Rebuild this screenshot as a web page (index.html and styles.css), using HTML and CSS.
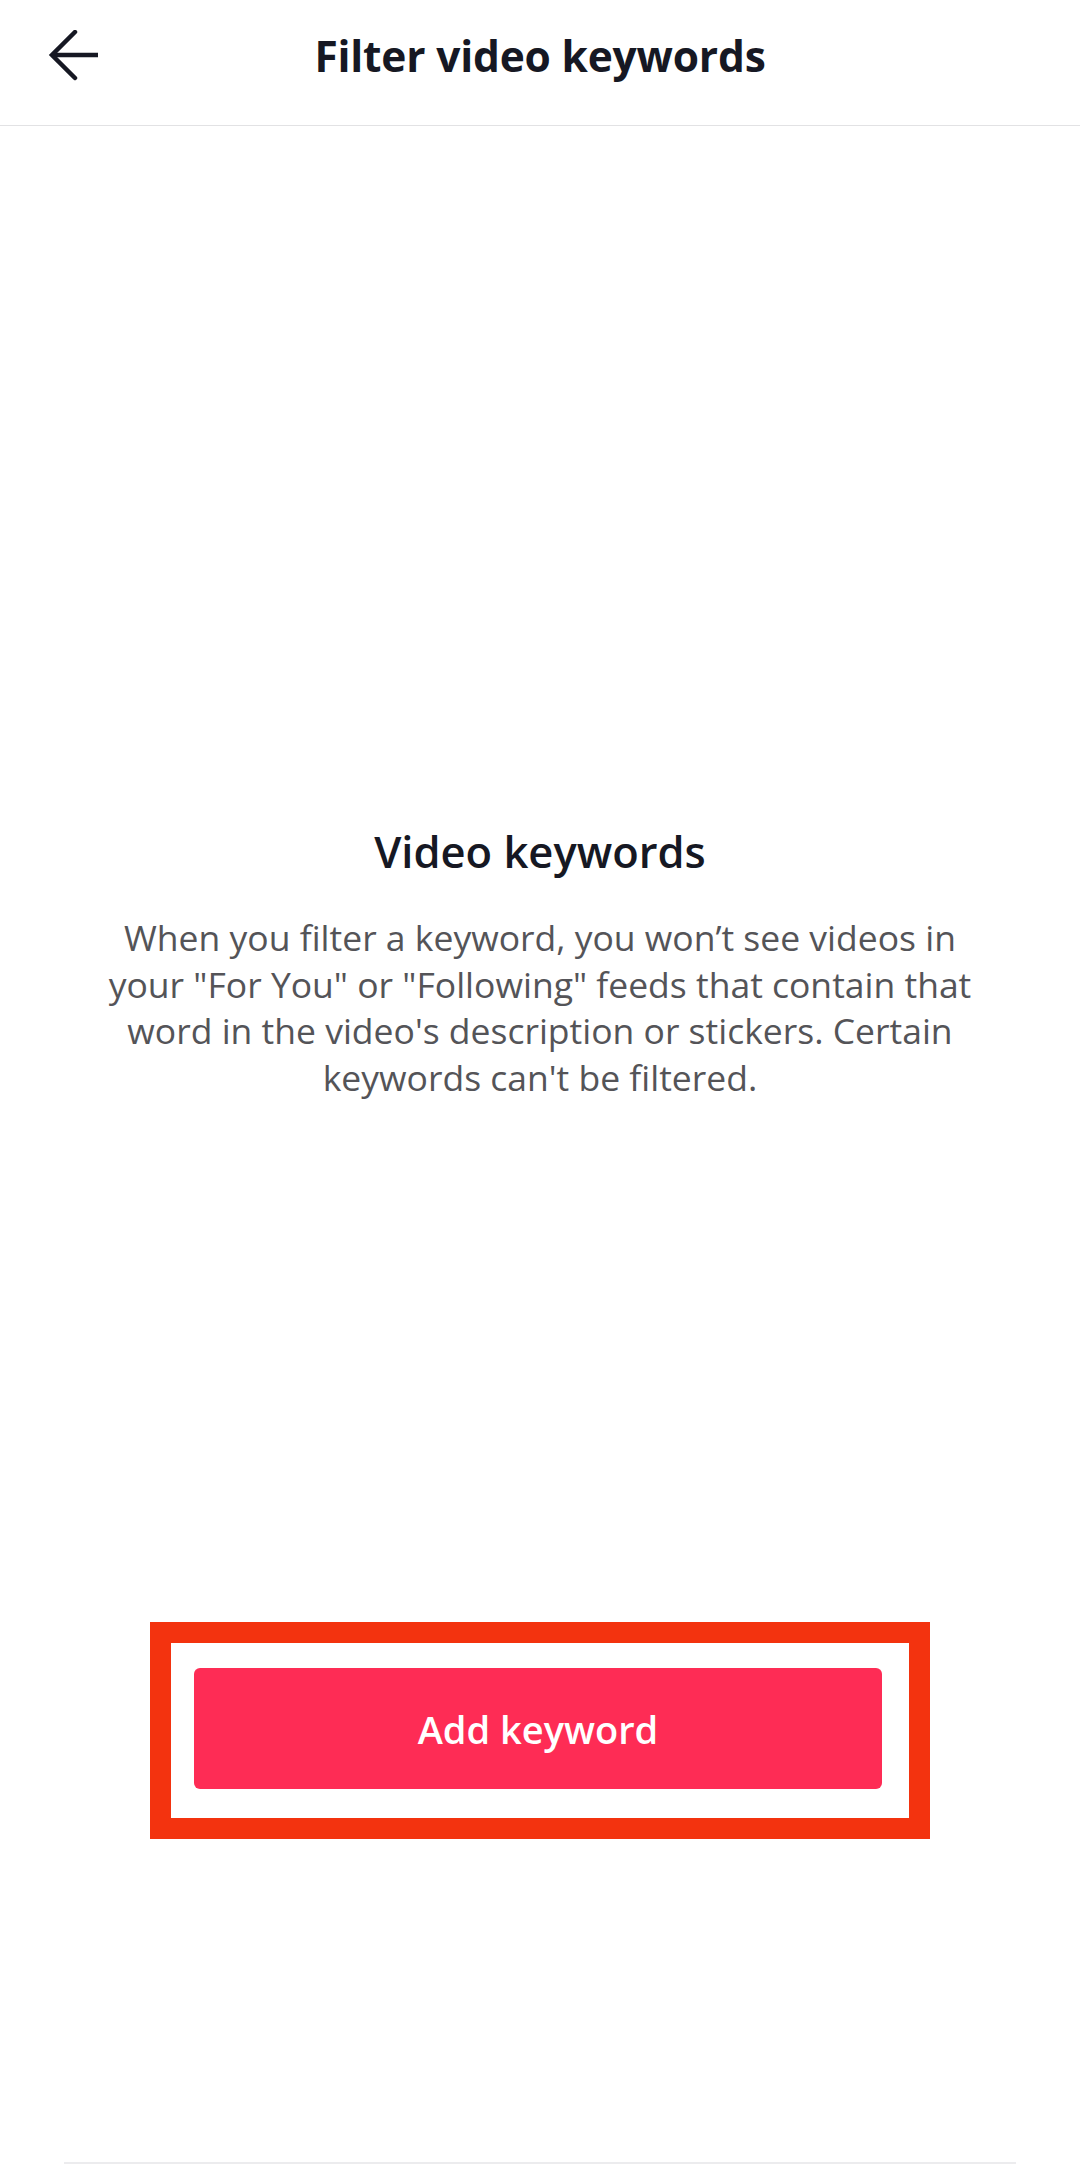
FILE: index.html
```html
<!DOCTYPE html>
<html lang="en">
<head>
<meta charset="utf-8">
<title>Filter video keywords</title>
<link rel="stylesheet" href="styles.css">
</head>
<body>
<div class="page">
  <header class="topbar">
    <button class="back" aria-label="Back">
      <svg viewBox="0 0 52 52" width="52" height="52" aria-hidden="true">
        <path d="M4 25 H50" fill="none" stroke="#161823" stroke-width="4.5" stroke-linecap="butt"/>
        <path d="M27 2 L4 25 L27 48" fill="none" stroke="#161823" stroke-width="4.5" stroke-linecap="round" stroke-linejoin="miter"/>
      </svg>
    </button>
    <h1 class="title">Filter video keywords</h1>
    <div class="spacer"></div>
  </header>

  <main class="content">
    <h2 class="heading">Video keywords</h2>
    <p class="desc">When you filter a keyword, you won’t see videos in<br>your "For You" or "Following" feeds that contain that<br>word in the video's description or stickers. Certain<br>keywords can't be filtered.</p>

    <div class="highlight">
      <button class="add-btn">Add keyword</button>
    </div>
  </main>

  <div class="home-line"></div>
</div>
</body>
</html>
```

FILE: styles.css
```css
* { box-sizing: border-box; }

html, body {
  margin: 0;
  padding: 0;
  background: #ffffff;
}

body {
  font-family: "Open Sans", "Noto Sans", "Liberation Sans", sans-serif;
  color: #161823;
}

.page {
  width: 1080px;
  min-height: 2168px;
  display: flex;
  flex-direction: column;
}

.topbar {
  height: 126px;
  padding-bottom: 14px;
  border-bottom: 1px solid #e2e2e4;
  display: grid;
  grid-template-columns: 1fr auto 1fr;
  align-items: center;
}

.back {
  justify-self: start;
  margin-left: 48px;
  width: 52px;
  height: 52px;
  padding: 0;
  border: 0;
  background: none;
  display: flex;
}

.title {
  margin: 0;
  font-size: 42.5px;
  font-weight: 700;
  line-height: 52px;
  color: #161823;
  letter-spacing: -0.2px;
}

.content {
  display: flex;
  flex-direction: column;
  align-items: center;
  padding-top: 700px;
}

.heading {
  margin: 0;
  font-size: 43.5px;
  font-weight: 600;
  line-height: 52px;
  color: #161823;
}

.desc {
  margin: 36px 0 0;
  font-size: 35.5px;
  line-height: 46.5px;
  font-weight: 400;
  color: #545458;
  text-align: center;
  white-space: nowrap;
}

.highlight {
  margin-top: 522px;
  width: 780px;
  height: 217px;
  border: 21px solid #f3330f;
  padding: 25px 27px 29px 23px;
  background: #ffffff;
}

.add-btn {
  width: 100%;
  height: 100%;
  border: 0;
  border-radius: 6px;
  background: #fe2c55;
  color: #ffffff;
  font-family: "Open Sans", "Noto Sans", "Liberation Sans", sans-serif;
  font-size: 38px;
  font-weight: 600;
}

.home-line {
  margin: auto 64px 4px;
  height: 2px;
  background: #ececee;
}
```
